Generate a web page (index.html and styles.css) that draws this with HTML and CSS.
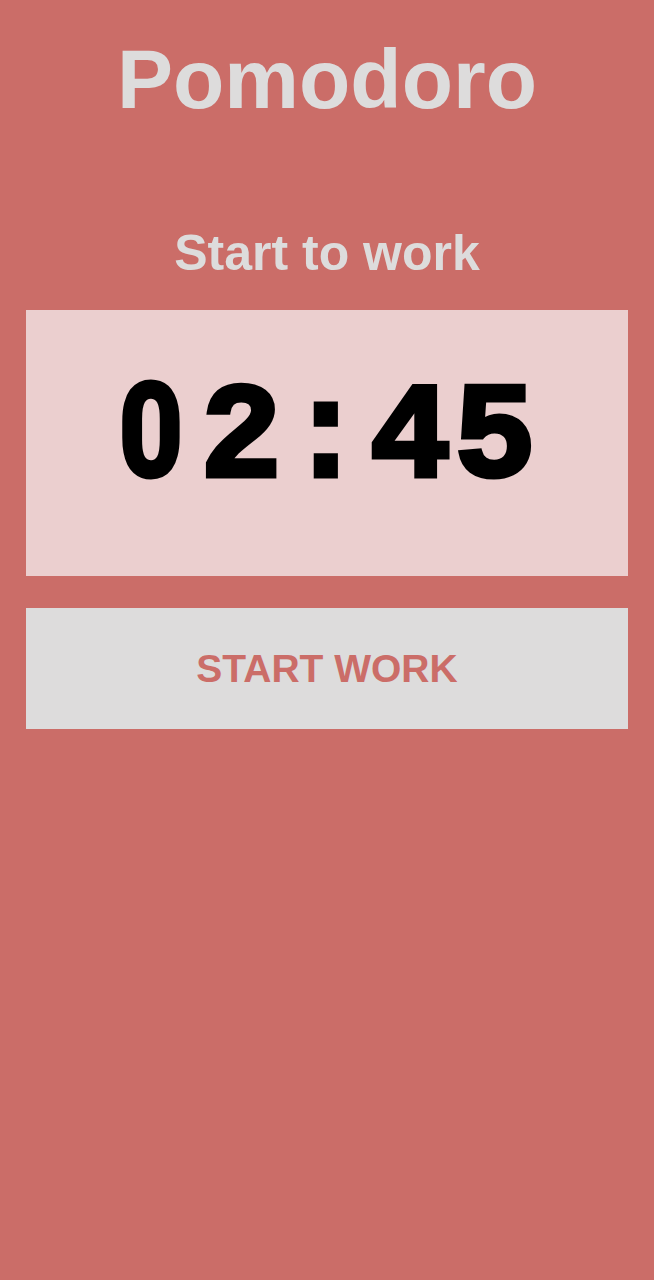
FILE: index.html
```html
<!DOCTYPE html>
<html lang="en">
<head>
<meta charset="utf-8">
<title>Pomodoro</title>
<link rel="stylesheet" href="styles.css">
</head>
<body>
<main class="app">
  <h1 class="title">Pomodoro</h1>
  <h2 class="status">Start to work</h2>
  <div class="timer"><span class="time"><span class="zero">0</span>2:45</span></div>
  <button class="action">START WORK</button>
</main>
</body>
</html>
```

FILE: styles.css
```css
html, body {
  margin: 0;
  padding: 0;
  background: #cb6d68;
}
body {
  min-height: 1280px;
  font-family: "Liberation Sans", Arial, sans-serif;
}
.app {
  display: flex;
  flex-direction: column;
  padding: 37px 26px 0;
}
.title {
  margin: 0;
  font-size: 84px;
  line-height: 84px;
  font-weight: bold;
  color: #dddcdc;
  text-align: center;
}
.status {
  margin: 107px 0 0;
  font-size: 50px;
  line-height: 50px;
  font-weight: bold;
  color: #dddcdc;
  text-align: center;
}
.timer {
  margin-top: 32px;
  height: 266px;
  background: #ebcfcf;
  display: flex;
  justify-content: center;
  align-items: flex-start;
}
.time {
  margin-top: 62px;
  padding-left: 3px;
  font-family: "Liberation Mono", "Courier New", monospace;
  font-weight: bold;
  font-size: 136px;
  line-height: 136px;
  letter-spacing: 3px;
  color: #000;
  -webkit-text-stroke: 5px #000;
}
.zero {
  display: inline-block;
  width: 82px;
  text-align: center;
  font-family: Roboto, "Liberation Sans", sans-serif;
  font-size: 130px;
  line-height: 100px;
  letter-spacing: 0;
  transform: translateX(-8px) scaleX(0.85);
}
.action {
  margin-top: 32px;
  height: 121px;
  border: 0;
  padding: 0;
  background: #dddcdc;
  color: #cb6d68;
  font-family: "Liberation Sans", Arial, sans-serif;
  font-weight: bold;
  font-size: 39px;
  display: flex;
  align-items: center;
  justify-content: center;
}
```
